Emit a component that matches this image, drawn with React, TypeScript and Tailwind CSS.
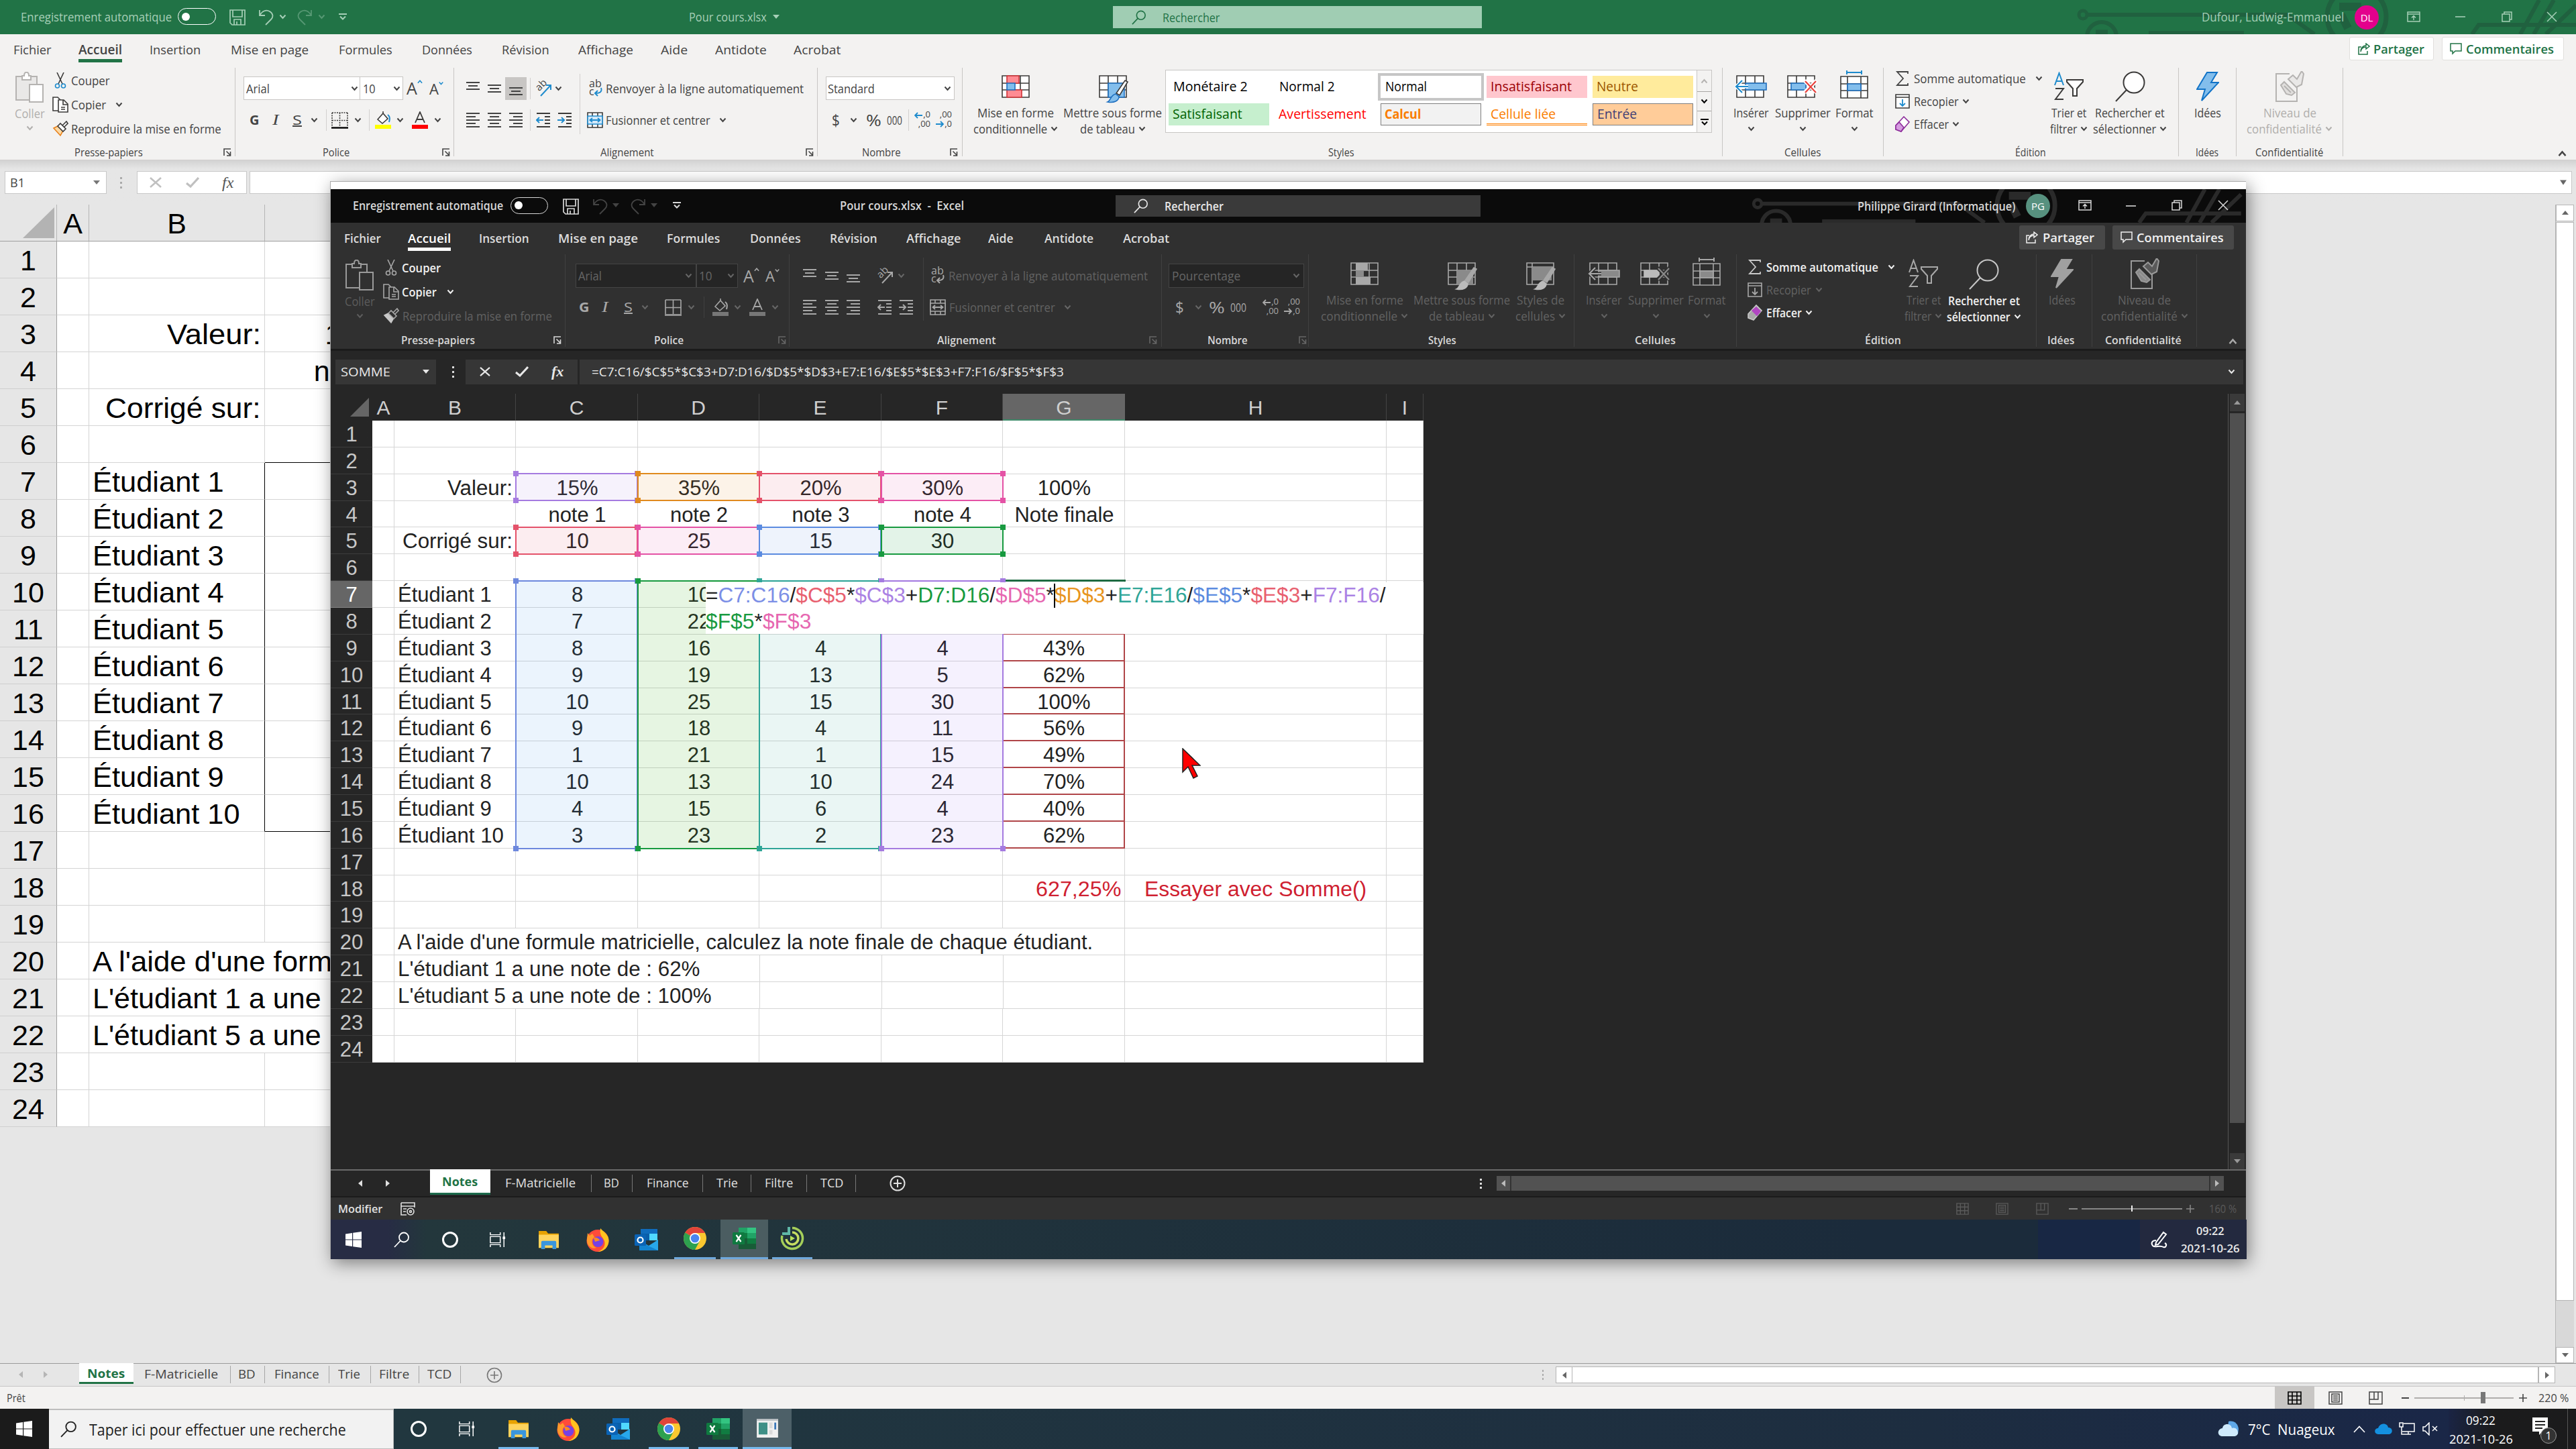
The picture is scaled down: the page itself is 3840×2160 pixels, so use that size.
import React, { useLayoutEffect, useRef, useState } from "react";

type P = { c?: string };
type Kids = { c?: string; children?: React.ReactNode };

/** Single-line text condensed or expanded to the width of its box. */
function L({ c = "", children }: Kids) {
  const box = useRef<HTMLSpanElement>(null);
  const inner = useRef<HTMLSpanElement>(null);
  const [k, setK] = useState(1);
  useLayoutEffect(() => {
    if (box.current && inner.current && inner.current.offsetWidth > 0) {
      setK(box.current.clientWidth / inner.current.offsetWidth);
    }
  }, []);
  return (
    <span ref={box} className={`block shrink-0 whitespace-nowrap ${c}`}>
      <span ref={inner} className="block w-max origin-left" style={{ transform: `scaleX(${k})` }}>
        {children}
      </span>
    </span>
  );
}

/* ---------- small glyphs ---------- */
const Chev = ({ c = "" }: P) => (
  <svg viewBox="0 0 11 8" className={`h-[8px] w-[11px] shrink-0 fill-none stroke-current ${c}`}>
    <path d="M1.5 1.5 5.5 6 9.5 1.5" strokeWidth="2" />
  </svg>
);
const Tri = ({ c = "" }: P) => (
  <svg viewBox="0 0 10 6" className={`h-[6px] w-[10px] shrink-0 fill-current ${c}`}>
    <path d="M0 0H10L5 6Z" />
  </svg>
);
const Save = ({ c = "" }: P) => (
  <svg viewBox="0 0 24 24" className={`h-[24px] w-[24px] shrink-0 fill-none stroke-current ${c}`} strokeWidth="1.7">
    <path d="M1 1H23V23H4L1 20ZM5 1V11H19V1M7 23V15H17V23M11 18V23" />
  </svg>
);
const Undo = ({ c = "" }: P) => (
  <svg viewBox="0 0 24 24" className={`h-[24px] w-[24px] shrink-0 fill-none stroke-current ${c}`} strokeWidth="1.8">
    <path d="M2 1V9H10M2 9C6 2 12 0 17 3C22 6 23 11 19 15L11 23" />
  </svg>
);
const Redo = ({ c = "" }: P) => (
  <svg viewBox="0 0 24 24" className={`h-[24px] w-[24px] shrink-0 fill-none stroke-current ${c}`} strokeWidth="1.8">
    <path d="M22 1V9H14M22 9C18 2 12 0 7 3C2 6 1 11 5 15L13 23" />
  </svg>
);
const Custom = ({ c = "" }: P) => (
  <svg viewBox="0 0 12 10" className={`h-[10px] w-[12px] shrink-0 fill-none stroke-current ${c}`} strokeWidth="2">
    <path d="M0 1H12M2 4.500L6 8.500L10 4.500" />
  </svg>
);
const Mag = ({ c = "" }: P) => (
  <svg viewBox="0 0 24 24" className={`shrink-0 fill-none stroke-current ${c}`} strokeWidth="1.8">
    <circle cx="15" cy="8.500" r="7" />
    <path d="M10 13.500 1 23" />
  </svg>
);
const RibbonOpt = ({ c = "" }: P) => (
  <svg viewBox="0 0 20 16" className={`h-[16px] w-[20px] shrink-0 fill-none stroke-current ${c}`} strokeWidth="1.5">
    <path d="M1 1H19V15H1ZM1 4H19M10 13V7M7 9.500 10 6.500 13 9.500" />
  </svg>
);
const Minus = ({ c = "" }: P) => (
  <svg viewBox="0 0 15 15" className={`h-[15px] w-[15px] shrink-0 stroke-current ${c}`} strokeWidth="1.6">
    <path d="M0 8H15" />
  </svg>
);
const Restore = ({ c = "" }: P) => (
  <svg viewBox="0 0 16 16" className={`h-[16px] w-[16px] shrink-0 fill-none stroke-current ${c}`} strokeWidth="1.5">
    <path d="M1 4H12V15H1ZM4 4V1H15V12H12" />
  </svg>
);
const Close = ({ c = "" }: P) => (
  <svg viewBox="0 0 16 16" className={`h-[16px] w-[16px] shrink-0 stroke-current ${c}`} strokeWidth="1.5">
    <path d="M1 1 15 15M15 1 1 15" />
  </svg>
);
const Launch = ({ c = "" }: P) => (
  <svg viewBox="0 0 12 12" className={`h-[12px] w-[12px] shrink-0 fill-none stroke-current ${c}`} strokeWidth="1.6">
    <path d="M1 11V1H11M4.500 4.500 10 10M10.500 5V11H5" />
  </svg>
);
const Share = ({ c = "" }: P) => (
  <svg viewBox="0 0 18 18" className={`h-[18px] w-[18px] shrink-0 fill-none stroke-current ${c}`} strokeWidth="1.5">
    <path d="M5 6H1V17H14V12M4 13C5 8 8 6 12 6V9L17 5L12 1V4C8 4 4 7 4 13Z" />
  </svg>
);
const Comment = ({ c = "" }: P) => (
  <svg viewBox="0 0 18 18" className={`h-[18px] w-[18px] shrink-0 fill-none stroke-current ${c}`} strokeWidth="1.5">
    <path d="M1 1H17V12H8L4 16V12H1Z" />
  </svg>
);

/* ---------- ribbon drawings; `d` is the dark theme ---------- */
type D = { c?: string; d?: boolean };
const blue = (d?: boolean) => (d ? "#a8a8a8" : "#1e8bcd");
const ink = (d?: boolean) => (d ? "#a8a8a8" : "#3b3a39");
const fillBlue = (d?: boolean) => (d ? "#8a8a8a" : "#83beec");
const paper = (d?: boolean) => (d ? "#303030" : "#ffffff");

const Paste = ({ d }: D) => (
  <svg viewBox="0 0 42 46" className="h-[46px] w-[42px] shrink-0" fill={d ? "none" : "#e9e8e7"} stroke={d ? "#9a9a9a" : "#b5b3b1"} strokeWidth="2">
    <path d="M1 7H10V12H23V7H32V42H1Z" />
    <path d="M10 12V6H13C13 -1 20 -1 20 6H23V12Z" fill={paper(d)} />
    <path d="M21 19H41V45H21Z" fill={paper(d)} />
  </svg>
);
const Cut = ({ d }: D) => (
  <svg viewBox="0 0 24 24" className="h-[24px] w-[24px] shrink-0" fill="none" strokeWidth="1.6">
    <path d="M7 0 15 17M17 0 9 17" stroke={ink(d)} />
    <circle cx="7.500" cy="20" r="3" stroke={blue(d)} />
    <circle cx="16.500" cy="20" r="3" stroke={blue(d)} />
  </svg>
);
const CopyI = ({ d }: D) => (
  <svg viewBox="0 0 24 24" className="h-[24px] w-[24px] shrink-0" fill={paper(d)} stroke={ink(d)} strokeWidth="1.6">
    <path d="M1 1H8L12 5V21H1Z" />
    <path d="M9 5H17L23 11V23H9ZM16 5V12H23M13 16H19M13 19H19" />
  </svg>
);
const Brush = ({ d }: D) => (
  <svg viewBox="0 0 24 24" className="h-[24px] w-[24px] shrink-0" strokeWidth="1.6">
    <path d="M2 11 12 22 16 15 8 8Z" fill={d ? "#c8c8c8" : "#fbd9a5"} stroke={d ? "#c8c8c8" : "#e8811a"} />
    <path d="M8 8 12 4 20 12 16 16ZM15 7 21 1 23 4 18 9" fill={paper(d)} stroke={ink(d)} />
  </svg>
);
const AUp = ({ d, down }: D & { down?: boolean }) => (
  <span className="flex shrink-0 items-start leading-none">
    <span className={down ? "text-[22px]" : "text-[25px]"}>A</span>
    <svg viewBox="0 0 9 6" className="h-[6px] w-[8px]" fill="none" stroke={blue(d)} strokeWidth="1.8">
      <path d={down ? "M1 1 4.500 5 8 1" : "M1 5 4.500 1 8 5"} />
    </svg>
  </span>
);
const Borders = ({ d }: D) => (
  <svg viewBox="0 0 25 25" className="h-[25px] w-[25px] shrink-0" fill="none" stroke={ink(d)} strokeWidth="1.6">
    <path d="M1 1H24M1 12.500H24M1 1V22M12.500 1V22M24 1V22" strokeDasharray={d ? "none" : "2 1.500"} />
    <path d="M0 23.500H25" strokeWidth="2.400" stroke={d ? "#a8a8a8" : "#000"} />
  </svg>
);
const Bucket = ({ d }: D) => (
  <svg viewBox="0 0 24 26" className="h-[26px] w-[24px] shrink-0">
    <path d="M4 12 12 3 19 11 11 18Z M12 3V0" fill={paper(d)} stroke={ink(d)} strokeWidth="1.600" />
    <path d="M19 5C23 8 22 12 21 16" stroke={blue(d)} strokeWidth="2" fill="none" />
    <path d="M0 20H24V26H0Z" fill={d ? "#777" : "#ffff00"} />
  </svg>
);
const FontColor = ({ d }: D) => (
  <svg viewBox="0 0 24 26" className="h-[26px] w-[24px] shrink-0">
    <path d="M5 17 12 1 19 17M8 12H16" fill="none" stroke={ink(d)} strokeWidth="1.800" />
    <path d="M0 20H24V26H0Z" fill={d ? "#777" : "#ff0000"} />
  </svg>
);
const Lines = ({ c = "", v }: { c?: string; v: "t" | "m" | "b" | "l" | "c" | "r" }) => {
  const paths = {
    t: "M1 3H21M4 8H18M1 13H21",
    m: "M1 7H21M4 12H18M1 17H21",
    b: "M1 11H21M4 16H18M1 21H21",
    l: "M1 2H21M1 7H15M1 12H21M1 17H15M1 22H21",
    c: "M1 2H21M4 7H18M1 12H21M4 17H18M1 22H21",
    r: "M1 2H21M7 7H21M1 12H21M7 17H21M1 22H21",
  };
  return (
    <svg viewBox="0 0 22 24" className={`h-[24px] w-[22px] shrink-0 stroke-current ${c}`} strokeWidth="1.800">
      <path d={paths[v]} />
    </svg>
  );
};
const Indent = ({ d, out }: D & { out?: boolean }) => (
  <svg viewBox="0 0 22 24" className="h-[24px] w-[22px] shrink-0" fill="none" strokeWidth="1.800">
    <path d="M1 2H21M13 7H21M13 12H21M13 17H21M1 22H21" stroke={ink(d)} />
    <path d={out ? "M11 12H1M5 8 1 12 5 16" : "M0 12H10M6 8 10 12 6 16"} stroke={blue(d)} strokeWidth="2" />
  </svg>
);
const Orient = ({ d, c = "" }: D) => (
  <span className={`relative h-[26px] w-[24px] shrink-0 ${c}`}>
    <span className="absolute left-[-1px] top-[-3px] block -rotate-45 text-[15px] leading-[20px]">ab</span>
    <svg viewBox="0 0 24 26" className="absolute inset-0 h-[26px] w-[24px]" fill="none" stroke={blue(d)} strokeWidth="2">
      <path d="M8 24 23 8M16 8H23V15" />
    </svg>
  </span>
);
const Wrap = ({ d, c = "" }: D) => (
  <span className={`relative h-[26px] w-[20px] shrink-0 text-[16px] ${c}`}>
    <span className="absolute left-0 top-[-4px] block leading-[18px]">ab</span>
    <span className="absolute left-0 top-[8px] block leading-[18px]">c</span>
    <svg viewBox="0 0 20 26" className="absolute inset-0 h-[26px] w-[20px]" fill="none" stroke={blue(d)} strokeWidth="2">
      <path d="M18 12C20 18 16 20 10 20M13 16 9 20 13 24" />
    </svg>
  </span>
);
const Merge = ({ d, c = "" }: D) => (
  <svg viewBox="0 0 24 24" className={`h-[24px] w-[24px] shrink-0 ${c}`} fill={paper(d)} strokeWidth="1.600">
    <path d="M1 1H23V23H1ZM8 1V23M16 1V23" stroke={ink(d)} />
    <path d="M1 6H23V18H1Z" fill={d ? "#303030" : "#d5e9f8"} stroke={blue(d)} />
    <path d="M4 12H20M8 9 4.500 12 8 15M16 9 19.500 12 16 15" stroke={blue(d)} fill="none" strokeWidth="1.800" />
  </svg>
);
const Dec = ({ d, more, c = "" }: D & { more?: boolean }) => (
  <span className={`relative h-[26px] w-[24px] shrink-0 text-[13px] ${c}`}>
    <span className="absolute right-0 top-[-3px] block leading-[14px]">{more ? ",0" : ",00"}</span>
    <span className="absolute right-0 top-[11px] block leading-[14px]">{more ? ",00" : ",0"}</span>
    <svg viewBox="0 0 24 26" className="absolute inset-0 h-[26px] w-[24px]" fill="none" stroke={blue(d)} strokeWidth="1.800">
      <path d={more ? "M12 6H1M5 2 1 6 5 10" : "M0 19H11M7 15 11 19 7 23"} />
    </svg>
  </span>
);
const grid = "M1 1H41V33H1ZM1 12H41M1 22H41M14 1V33M28 1V33";
const CondFmt = ({ d }: D) => (
  <svg viewBox="0 0 42 34" className="h-[34px] w-[42px]">
    <path d={grid} fill={paper(d)} stroke={ink(d)} strokeWidth="1.600" />
    <path d="M8 1H26V12H8ZM8 22H30V33H8Z" fill={d ? "#a8a8a8" : "#ff8b93"} stroke={d ? "none" : "#d13438"} strokeWidth="1.600" />
    <path d="M8 12H20V22H8Z" fill={fillBlue(d)} stroke={d ? "none" : "#1e6fbf"} strokeWidth="1.600" />
  </svg>
);
const TableFmt = ({ d, plain }: D & { plain?: boolean }) => (
  <svg viewBox="0 0 46 42" className="ml-[4px] mt-[8px] h-[42px] w-[46px]">
    <path d={plain ? "M1 1H41V33H1ZM1 7H41M9 1V33" : grid} fill={paper(d)} stroke={ink(d)} strokeWidth="1.600" />
    <path d={plain ? "M9 7H38V27H9Z" : "M14 12H38V33H14Z"} fill={fillBlue(d)} stroke={d ? "none" : "#1e6fbf"} strokeWidth="1.600" />
    <path d="M43 10 31 30 26 27 39 8Z" fill={d ? "#a8a8a8" : "#fff"} stroke={ink(d)} strokeWidth="1.600" />
    <path d="M25 28 30 32C30 38 23 42 13 40C18 38 17 30 25 28Z" fill={d ? "#bbb" : "#83beec"} stroke={d ? "#bbb" : "#1e6fbf"} strokeWidth="1.600" />
  </svg>
);
const InsertI = ({ d }: D) => (
  <svg viewBox="-2 0 48 34" className="h-[34px] w-[48px]">
    <path d={grid} fill={paper(d)} stroke={ink(d)} strokeWidth="1.600" />
    <path d="M14 12H45V22H14Z" fill={fillBlue(d)} stroke={d ? "#a8a8a8" : "#1e6fbf"} strokeWidth="1.600" />
    <path d="M18 17H0M9 8 0 17 9 26" fill="none" stroke={paper(d)} strokeWidth="5" />
    <path d="M18 17H0M9 8 0 17 9 26" fill="none" stroke={blue(d)} strokeWidth="2.200" />
  </svg>
);
const DeleteI = ({ d }: D) => (
  <svg viewBox="0 0 46 34" className="h-[34px] w-[46px]">
    <path d={grid} fill={paper(d)} stroke={ink(d)} strokeWidth="1.600" />
    <path d="M6 12H28V22H6Z" fill={d ? "#bbb" : "#83beec"} stroke={d ? "#bbb" : "#1e6fbf"} strokeWidth="1.600" />
    <path d="M26 8 44 26M44 8 26 26" fill="none" stroke={paper(d)} strokeWidth="6" />
    <path d="M27 9 43 26M43 9 27 26" fill="none" stroke={d ? "#8a8a8a" : "#e8413c"} strokeWidth="2.200" />
  </svg>
);
const FormatI = ({ d }: D) => (
  <svg viewBox="0 0 42 42" className="-mt-[6px] h-[42px] w-[42px]">
    <path d="M10 3H32M10 0V6M32 0V6" stroke={blue(d)} strokeWidth="2" />
    <path d="M1 9H41V41H1ZM1 20H41M1 30H41M11 9V41M31 9V41" fill={paper(d)} stroke={ink(d)} strokeWidth="1.600" />
    <path d="M11 20H31V30H11Z" fill={fillBlue(d)} stroke={d ? "#a8a8a8" : "#1e6fbf"} strokeWidth="1.600" />
  </svg>
);
const Sigma = ({ c = "" }: D) => (
  <svg viewBox="0 0 20 22" className={`h-[22px] w-[22px] shrink-0 fill-none stroke-current ${c}`} strokeWidth="1.800">
    <path d="M18 4V1H2L11 11L2 21H18V18" />
  </svg>
);
const FillDown = ({ d, c = "" }: D) => (
  <svg viewBox="0 0 22 22" className={`h-[22px] w-[22px] shrink-0 ${c}`} fill={paper(d)} strokeWidth="1.600">
    <path d="M1 1H21V21H1ZM1 5H21" stroke={ink(d)} />
    <path d="M11 8V18M7 14 11 18 15 14" stroke={blue(d)} fill="none" strokeWidth="1.800" />
  </svg>
);
const Eraser = ({ d, c = "" }: D) => (
  <svg viewBox="0 0 22 24" className={`h-[24px] w-[22px] shrink-0 ${c}`} strokeWidth="1.600">
    <path d="M1 14 13 1 21 9 9 23 1 20Z" fill={d ? "#a8a8a8" : "#fff"} stroke={d ? "#c8c8c8" : "#8e2f9c"} />
    <path d={d ? "M7 9 14 16 19 10 13 4Z" : "M1 14 6 9 13 17 9 23 1 20Z"} fill={d ? "#b146c2" : "#d59be0"} stroke={d ? "#b146c2" : "#8e2f9c"} />
  </svg>
);
const SortFilter = ({ d }: D) => (
  <svg viewBox="0 0 44 44" className="h-[44px] w-[44px]" fill="none" strokeWidth="2">
    <path d="M1 20 7.500 2 14 20M3.500 14H11.500" stroke={blue(d)} />
    <path d="M2 25H14L2 41H14" stroke={ink(d)} />
    <path d="M19 12H43V15L34 25V36H28V25L19 15Z" stroke={ink(d)} fill={d ? "none" : "#fff"} />
  </svg>
);
const BigMag = ({ d }: D) => (
  <svg viewBox="0 0 46 46" className="h-[46px] w-[46px]" fill={d ? "none" : "#fff"} stroke={d ? "#c8c8c8" : "#3b3a39"} strokeWidth="2">
    <circle cx="29" cy="17" r="15.500" />
    <path d="M18 28 2 45" />
  </svg>
);
const Bolt = ({ d }: D) => (
  <svg viewBox="0 0 34 44" className="h-[44px] w-[34px]" fill={d ? "#a0a0a0" : "#83beec"} stroke={d ? "#a0a0a0" : "#1173c7"} strokeWidth="2">
    <path d="M16 1H31L22 16H33L8 43L13 26H1Z" />
  </svg>
);
const Sensitivity = ({ d }: D) => (
  <svg viewBox="0 0 44 46" className="h-[46px] w-[44px]" fill="none" stroke={d ? "#9a9a9a" : "#b5b3b1"} strokeWidth="2">
    <path d="M22 4H2V45H33V22" />
    <path d="M9 21 14 16 30 32 25 36 17 34ZM14 22 24 32" fill={d ? "#8a8a8a" : "#e1dfdd"} />
    <path d="M20 12 27 6 33 12 40 0 43 4 40 20 32 24Z" fill={d ? "#5a5a5a" : "#e9e8e7"} />
  </svg>
);

/* ---------- brand marks for the task bars ---------- */
const WinLogo = ({ c = "" }: P) => (
  <svg viewBox="0 0 24 24" className={`h-[24px] w-[24px] shrink-0 fill-white ${c}`}>
    <path d="M0 3.400 10 2V11.400H0ZM11.200 1.800 24 0V11.400H11.200ZM0 12.600H10V22L0 20.600ZM11.200 12.600H24V24L11.200 22.200Z" />
  </svg>
);
const Ring = ({ c = "" }: P) => (
  <svg viewBox="0 0 26 26" className={`h-[26px] w-[26px] shrink-0 fill-none stroke-white ${c}`} strokeWidth="3">
    <circle cx="13" cy="13" r="10.500" />
  </svg>
);
const TaskView = ({ c = "" }: P) => (
  <svg viewBox="0 0 26 26" className={`h-[24px] w-[26px] shrink-0 fill-none stroke-white ${c}`} strokeWidth="1.600">
    <path d="M1 1V5H17V1M1 8H17V18H1ZM1 25V21H17V25M23 1V25" />
    <path d="M21 8H25V12H21Z" fill="#fff" stroke="none" />
  </svg>
);
const Folder = ({ c = "" }: P) => (
  <svg viewBox="0 0 34 30" className={`h-[28px] w-[34px] shrink-0 ${c}`}>
    <path d="M1 1H13L16 5H33V28H1Z" fill="#e8a200" />
    <path d="M1 7H33V28H1Z" fill="#ffd45e" />
    <path d="M5 30V19Q5 17 7 17H27Q29 17 29 19V30H23V24H11V30Z" fill="#3a96dd" />
  </svg>
);
const Firefox = ({ c = "" }: P) => (
  <svg viewBox="0 0 36 36" className={`h-[36px] w-[36px] shrink-0 ${c}`}>
    <circle cx="18" cy="19.500" r="16.500" fill="#ff4b3a" />
    <path d="M22 1C26 6 35 10 34.500 20C34 29 27 36 18 36C27 33 30 26 28 20C26 14 20 12 22 1Z" fill="#ffc21f" />
    <path d="M3 8 6 12 10 9 13 14C8 17 8 27 16 30C8 33 1 26 2 17Z" fill="#ff9a2b" />
    <circle cx="18.500" cy="21" r="8" fill="#7542e5" />
    <path d="M12 15C16 14 20 16 21 19L14 21Z" fill="#ff8a1f" />
  </svg>
);
const Outlook = ({ c = "" }: P) => (
  <svg viewBox="0 0 36 34" className={`h-[34px] w-[36px] shrink-0 ${c}`}>
    <path d="M9 1H34V18H9Z" fill="#0f6cbd" />
    <path d="M22 8H34V18H22Z" fill="#50d9ff" />
    <path d="M9 8H22V18H9Z" fill="#0a5ea8" />
    <path d="M7 18 21 26 35 17V33H7Z" fill="#28a8ea" />
    <path d="M7 20 35 33H7Z" fill="#1383cf" />
    <rect y="9" width="17" height="17" rx="1.500" fill="#0a63b5" />
    <circle cx="8.500" cy="17.500" r="4" fill="none" stroke="#fff" strokeWidth="2.200" />
  </svg>
);
const Chrome = ({ c = "" }: P) => (
  <svg viewBox="0 0 36 36" className={`h-[36px] w-[36px] shrink-0 ${c}`}>
    <circle cx="18" cy="18" r="17" fill="#fbc72f" />
    <path d="M18 18 3.300 9.500A17 17 0 0 1 32.700 9.500L33 10H18Z" fill="#e0443a" />
    <path d="M3.300 9.500A17 17 0 0 0 18 35L25 22 18 18Z" fill="#2da14f" />
    <circle cx="18" cy="18" r="8" fill="#fff" />
    <circle cx="18" cy="18" r="6.300" fill="#4a85ee" />
  </svg>
);
const ExcelI = ({ c = "" }: P) => (
  <svg viewBox="0 0 36 34" className={`h-[34px] w-[36px] shrink-0 ${c}`}>
    <path d="M9 1H22V12H9Z" fill="#21a366" />
    <path d="M22 1H35V9H22Z" fill="#33c481" />
    <path d="M22 9H35V17H22Z" fill="#21a366" />
    <path d="M9 9H22V17H9Z" fill="#107c41" />
    <path d="M9 17H35V33H9Z" fill="#185c37" />
    <path d="M22 17H35V25H22Z" fill="#107c41" />
    <rect y="8" width="18" height="18" rx="1.500" fill="#0f7a40" />
    <path d="M5.500 12 12.500 22M12.500 12 5.500 22" stroke="#fff" strokeWidth="2.200" />
  </svg>
);
const Camtasia = ({ c = "" }: P) => (
  <svg viewBox="0 0 36 36" className={`h-[36px] w-[36px] shrink-0 fill-none ${c}`}>
    <path d="M18 2.500A15.500 15.500 0 1 1 3 14" stroke="#a5cf5a" strokeWidth="3.500" />
    <path d="M18 9A9 9 0 1 1 9 19" stroke="#c6dd62" strokeWidth="3.500" />
    <path d="M3 11H13V1" stroke="#5fb8a8" strokeWidth="4" />
    <path d="M15 14 22 18 15 22Z" fill="#b9e35a" />
  </svg>
);
const AppWin = () => (
  <svg viewBox="0 0 34 30" className="h-[28px] w-[34px] shrink-0">
    <path d="M0 0H34V30H0Z" fill="#f0f0f0" />
    <path d="M0 0H34V3H0Z" fill="#b9bec2" />
    <path d="M3 6H17V25H3Z" fill="#3f8f86" />
    <path d="M20 6H25V15H20ZM20 18H25V25H20Z" fill="#dadada" />
    <path d="M28 6H31V17H28Z" fill="#3b78b8" />
  </svg>
);

/* ---------- shared pieces ---------- */
const Sep = ({ c }: { c: string }) => <span className={`w-px shrink-0 ${c}`} />;
const Big = ({ c, icon, children }: { c: string; icon: React.ReactNode; children: React.ReactNode }) => (
  <div className={`flex shrink-0 flex-col items-center ${c}`}>
    <div className="mb-[4px] flex h-[46px] items-center justify-center">{icon}</div>
    {children}
  </div>
);
const Line = ({ children }: Kids) => <div className="flex h-[24px] items-center gap-[5px]">{children}</div>;
const Toggle = ({ c = "" }: P) => (
  <span className={`flex h-[25px] shrink-0 items-center rounded-full border-[1.5px] border-current pl-[5px] ${c}`}>
    <span className="h-[12px] w-[12px] rounded-full bg-white" />
  </span>
);
const Circuit = ({ stroke }: { stroke: string }) => (
  <svg viewBox="0 0 745 51" className="absolute right-0 top-0 h-full w-[745px] fill-none" stroke={stroke} strokeWidth="6">
    <circle cx="10" cy="22" r="6" strokeWidth="5" />
    <path d="M17 22H315L355 51M108 49H250M590 51 600 37H745M662 51 690 0M682 51 712 0M700 51 745 8" />
    <circle cx="38" cy="55" r="22" />
    <path d="M29 48H47" strokeWidth="7" />
    <circle cx="418" cy="25" r="44" strokeWidth="7" />
    <path d="M392 10H425M395 22 405 42" strokeWidth="12" />
  </svg>
);

/* ---------- light window ---------- */
const LG = ({ c, label, children }: { c: string; label: React.ReactNode; children: React.ReactNode }) => (
  <div className={`h-[132px] shrink-0 border-r border-[#c8c6c4] ${c}`}>
    <div className="flex h-[113px]">{children}</div>
    <div className="flex h-[26px] items-center text-[16.5px]">{label}</div>
  </div>
);

function LightRibbon() {
  return (
    <div className="flex h-[138px] border-b border-[#d2d0ce] text-[18px] text-[#444]">
      <LG c="w-[351px]" label={<><L c="ml-[111px] w-[102px]">Presse-papiers</L><Launch c="ml-[120px]" /></>}>
        <div className="ml-[18px] flex w-[52px] shrink-0 flex-col items-center pt-[6px] text-[#b1afad]">
          <Paste />
          <L c="mt-[4px] w-[45px]">Coller</L>
          <Chev c="mt-[6px]" />
        </div>
        <div className="pt-px">
          <div className="flex h-[36px] items-center pl-[8px]"><Cut /><L c="ml-[4px] w-[58px]">Couper</L></div>
          <div className="flex h-[36px] items-center pl-[8px]"><CopyI /><L c="ml-[4px] w-[52px]">Copier</L><Chev c="ml-[14px]" /></div>
          <div className="flex h-[36px] items-center pl-[8px]"><Brush /><L c="ml-[4px] w-[224px]">Reproduire la mise en forme</L></div>
        </div>
      </LG>
      <LG c="w-[326px]" label={<><L c="ml-[130px] w-[40px]">Police</L><Launch c="ml-[138px]" /></>}>
        <div className="pt-[13px]">
          <div className="flex h-[35px] items-center">
            <div className="ml-[12px] flex h-[35px] w-[174px] items-center border border-[#c8c6c4] bg-white"><L c="ml-[3px] w-[35px]">Arial</L><Chev c="ml-[121px]" /></div>
            <div className="flex h-[35px] w-[64px] items-center border border-l-0 border-[#c8c6c4] bg-white"><L c="ml-[4px] w-[19px]">10</L><Chev c="ml-[26px]" /></div>
            <div className="ml-[5px] w-[24px]"><AUp /></div>
            <div className="ml-[10px] w-[21px]"><AUp down /></div>
          </div>
          <div className="mt-[13px] flex h-[34px] items-center">
            <L c="ml-[21px] w-[14px] text-[20px] font-bold">G</L>
            <L c="ml-[20px] w-[10px] font-['Liberation_Serif'] text-[23px] italic">I</L>
            <L c="ml-[20px] w-[14px] text-[20px] underline">S</L>
            <Chev c="ml-[13px]" /><Sep c="ml-[12px] h-[32px] bg-[#d2d0ce]" />
            <span className="ml-[7px] shrink-0"><Borders /></span><Chev c="ml-[9px]" /><Sep c="ml-[11px] h-[32px] bg-[#d2d0ce]" />
            <span className="ml-[8px] shrink-0"><Bucket /></span><Chev c="ml-[8px]" />
            <span className="ml-[12px] shrink-0"><FontColor /></span><Chev c="ml-[9px]" />
          </div>
        </div>
      </LG>
      <LG c="w-[542px]" label={<><L c="ml-[218px] w-[80px]">Alignement</L><Launch c="ml-[226px]" /></>}>
        <div className="w-[187px] shrink-0 pt-[13px]">
          <div className="flex h-[35px] items-center">
            <Lines c="ml-[17px]" v="t" /><Lines c="ml-[10px]" v="m" />
            <span className="ml-[5px] flex h-[34px] w-[32px] shrink-0 items-center justify-center bg-[#c8c6c4]"><Lines v="b" /></span>
            <Sep c="ml-[5px] h-[32px] bg-[#d2d0ce]" /><Orient c="ml-[7px]" /><Chev c="ml-[5px]" />
          </div>
          <div className="mt-[13px] flex h-[34px] items-center">
            <Lines c="ml-[17px]" v="l" /><Lines c="ml-[10px]" v="c" /><Lines c="ml-[10px]" v="r" />
            <Sep c="ml-[10px] h-[32px] bg-[#d2d0ce]" />
            <span className="ml-[8px] shrink-0"><Indent out /></span><span className="ml-[10px] shrink-0"><Indent /></span>
          </div>
        </div>
        <Sep c="mt-[9px] h-[90px] bg-[#d2d0ce]" />
        <div className="pt-[13px]">
          <div className="flex h-[35px] items-center"><Wrap c="ml-[13px]" /><L c="ml-[5px] w-[295px]">Renvoyer à la ligne automatiquement</L></div>
          <div className="mt-[13px] flex h-[34px] items-center"><Merge c="ml-[10px]" /><L c="ml-[4px] w-[156px]">Fusionner et centrer</L><Chev c="ml-[13px]" /></div>
        </div>
      </LG>
      <LG c="w-[216px]" label={<><L c="ml-[66px] w-[58px]">Nombre</L><Launch c="ml-[73px]" /></>}>
        <div className="pt-[13px]">
          <div className="ml-[12px] flex h-[35px] w-[192px] items-center border border-[#c8c6c4] bg-white"><L c="ml-[2px] w-[70px]">Standard</L><Chev c="ml-[103px]" /></div>
          <div className="mt-[13px] flex h-[34px] items-center">
            <L c="ml-[21px] w-[12px] text-[24px]">$</L><Chev c="ml-[15px]" /><L c="ml-[13px] w-[23px] text-[24px]">%</L><L c="ml-[8px] w-[23px]">000</L>
            <Sep c="ml-[9px] h-[32px] bg-[#d2d0ce]" /><Dec more c="ml-[8px]" /><Dec c="ml-[8px]" />
          </div>
        </div>
      </LG>
      <LG c="w-[1133px]" label={<L c="ml-[545px] w-[39px]">Styles</L>}>
        <Big c="ml-[10px] w-[137px] pt-[5px]" icon={<CondFmt />}>
          <Line><L c="w-[114px]">Mise en forme</L></Line><Line><L c="w-[110px]">conditionnelle</L><Chev /></Line>
        </Big>
        <Big c="w-[153px] pt-[5px]" icon={<TableFmt />}>
          <Line><L c="w-[147px]">Mettre sous forme</L></Line><Line><L c="w-[82px]">de tableau</L><Chev /></Line>
        </Big>
        <div className="ml-[2px] mt-[3px] flex h-[94px] w-[815px] border border-[#c8c6c4] bg-white text-[20px] leading-[32px]">
          <div className="grid w-[791px] shrink-0 grid-cols-[repeat(5,150px)] grid-rows-[33px_33px] gap-x-[8px] gap-y-[8px] pl-[4px] pt-[8px] text-black">
            <div className="pl-[7px]"><L c="w-[111px]">Monétaire 2</L></div>
            <div className="pl-[7px]"><L c="w-[83px]">Normal 2</L></div>
            <div className="pl-[7px] outline-4 outline-[#c6c6c6]"><L c="w-[62px]">Normal</L></div>
            <div className="bg-[#ffc7ce] pl-[6px] text-[#9c0006]"><L c="w-[121px]">Insatisfaisant</L></div>
            <div className="bg-[#ffeb9c] pl-[6px] text-[#9c5700]"><L c="w-[62px]">Neutre</L></div>
            <div className="bg-[#c6efce] pl-[6px] text-[#006100]"><L c="w-[104px]">Satisfaisant</L></div>
            <div className="pl-[6px] text-[#ff0000]"><L c="w-[131px]">Avertissement</L></div>
            <div className="border border-[#7f7f7f] bg-[#f2f2f2] pl-[5px] font-bold leading-[30px] text-[#fa7d00]"><L c="w-[54px]">Calcul</L></div>
            <div className="border-b-[3px] border-double border-[#ff8001] pl-[6px] text-[#fa7d00]"><L c="w-[97px]">Cellule liée</L></div>
            <div className="border border-[#7f7f7f] bg-[#ffcc99] pl-[6px] leading-[30px] text-[#3f3f76]"><L c="w-[59px]">Entrée</L></div>
          </div>
          <div className="flex w-[22px] flex-col border-l border-[#c8c6c4] text-black">
            <div className="flex h-[31px] items-center justify-center bg-[#f3f2f1] text-[#b5b3b1]"><Chev c="rotate-180" /></div>
            <div className="flex h-[30px] items-center justify-center border-y border-[#a8a6a4] bg-[#f3f2f1]"><Chev /></div>
            <div className="flex h-[31px] items-center justify-center bg-[#f3f2f1]"><Custom /></div>
          </div>
        </div>
      </LG>
      <LG c="w-[240px]" label={<L c="ml-[92px] w-[54px]">Cellules</L>}>
        <Big c="ml-[13px] w-[58px] pt-[5px]" icon={<InsertI />}><Line><L c="w-[53px]">Insérer</L></Line><Line><Chev /></Line></Big>
        <Big c="ml-[4px] w-[88px] pt-[5px]" icon={<DeleteI />}><Line><L c="w-[83px]">Supprimer</L></Line><Line><Chev /></Line></Big>
        <Big c="ml-[3px] w-[60px] pt-[5px]" icon={<FormatI />}><Line><L c="w-[57px]">Format</L></Line><Line><Chev /></Line></Big>
      </LG>
      <LG c="w-[440px]" label={<L c="ml-[196px] w-[46px]">Édition</L>}>
        <div className="-mt-px w-[243px] shrink-0">
          <div className="flex h-[34px] items-center"><Sigma c="ml-[17px]" /><L c="ml-[6px] w-[167px]">Somme automatique</L><Chev c="ml-[14px]" /></div>
          <div className="flex h-[34px] items-center"><FillDown c="ml-[17px]" /><L c="ml-[6px] w-[67px]">Recopier</L><Chev c="ml-[5px]" /></div>
          <div className="flex h-[34px] items-center"><Eraser c="ml-[17px]" /><L c="ml-[6px] w-[52px]">Effacer</L><Chev c="ml-[5px]" /></div>
        </div>
        <Big c="w-[66px] pt-[5px]" icon={<SortFilter />}><Line><L c="w-[52px]">Trier et</L></Line><Line><L c="w-[40px]">filtrer</L><Chev /></Line></Big>
        <Big c="w-[116px] pt-[5px]" icon={<BigMag />}><Line><L c="w-[104px]">Rechercher et</L></Line><Line><L c="w-[94px]">sélectionner</L><Chev /></Line></Big>
      </LG>
      <LG c="w-[86px]" label={<L c="ml-[25px] w-[34px]">Idées</L>}>
        <Big c="w-[85px] pt-[5px]" icon={<Bolt />}><Line><L c="w-[40px]">Idées</L></Line></Big>
      </LG>
      <LG c="w-[159px]" label={<L c="ml-[28px] w-[101px]">Confidentialité</L>}>
        <Big c="w-[158px] pt-[5px] text-[#b1afad]" icon={<Sensitivity />}>
          <Line><L c="w-[79px]">Niveau de</L></Line><Line><L c="w-[112px]">confidentialité</L><Chev /></Line>
        </Big>
      </LG>
      <Chev c="ml-[321px] mt-[124px] scale-125 rotate-180" />
    </div>
  );
}

const lightNotes: Record<number, [string, string]> = {
  20: ["A l'aide d'une form", "w-[357px]"],
  21: ["L'étudiant 1 a une", "w-[341px]"],
  22: ["L'étudiant 5 a une", "w-[341px]"],
};
const all24 = Array.from({ length: 24 }, (_, i) => i + 1);

function LightSheet() {
  return (
    <div className="w-[660px] font-['Liberation_Sans'] text-[43px] leading-[54px] text-black">
      <div className="flex h-[55px] border-b border-[#9f9f9f]">
        <div className="flex w-[85px] items-end justify-end border-r border-[#b5b5b5] pb-[4px] pr-[3px]">
          <svg viewBox="0 0 47 46" className="h-[46px] w-[47px] fill-[#b3b3b3]"><path d="M47 0V46H0Z" /></svg>
        </div>
        <div className="w-[48px] border-r border-[#b5b5b5] pt-px text-center">A</div>
        <div className="w-[262px] border-r border-[#b5b5b5] pt-px text-center">B</div>
      </div>
      {all24.map((n) => (
        <div key={n} className="flex h-[55px]">
          <div className="w-[85px] shrink-0 border-b border-r border-b-[#cfcfcf] border-r-[#9f9f9f] pt-px text-center">{n}</div>
          <div className="w-[48px] shrink-0 border-b border-r border-[#d4d4d4] bg-white" />
          {lightNotes[n] ? (
            <div className="w-[527px] border-b border-[#d4d4d4] bg-white pl-[5px] pt-px"><L c={lightNotes[n][1]}>{lightNotes[n][0]}</L></div>
          ) : (
            <>
              <div
                className={
                  n >= 7 && n <= 16
                    ? "w-[262px] shrink-0 border-b border-r border-b-[#d4d4d4] border-r-black bg-white pl-[5px] pt-px"
                    : "flex w-[262px] shrink-0 justify-end border-b border-r border-[#d4d4d4] bg-white pr-[5px] pt-px"
                }
              >
                {n >= 7 && n <= 16 && <L c={n === 16 ? "w-[220px]" : "w-[196px]"}>Étudiant {n - 6}</L>}
                {n === 3 && <L c="w-[140px]">Valeur:</L>}
                {n === 5 && <L c="w-[232px]">Corrigé sur:</L>}
              </div>
              <div className={`w-[265px] border-b bg-white pt-px text-center ${n === 6 || n === 16 ? "border-black" : "border-[#d4d4d4]"}`}>
                {n === 3 ? "15%" : n === 4 ? "note 1" : ""}
              </div>
            </>
          )}
        </div>
      ))}
    </div>
  );
}

function LightWindow() {
  return (
    <div className="flex h-[2100px] flex-col bg-[#e6e6e6]">
      <div className="relative flex h-[51px] shrink-0 items-center bg-[#217346] pb-[2px] text-[18px] text-[#a6cfb7]">
        <Circuit stroke="#20613f" />
        <L c="ml-[31px] w-[225px]">Enregistrement automatique</L>
        <Toggle c="ml-[9px] w-[57px] text-white" />
        <Save c="ml-[20px] mt-[3px]" /><Undo c="ml-[19px] mt-[3px]" /><Chev c="ml-[7px]" /><Redo c="ml-[15px] mt-[3px] opacity-40" /><Chev c="ml-[8px] opacity-40" /><Custom c="ml-[20px]" />
        <L c="ml-[510px] w-[116px]">Pour cours.xlsx</L><Tri c="ml-[9px]" />
        <div className="ml-[497px] mt-[2px] flex h-[33px] w-[550px] shrink-0 items-center bg-[#a0cdb3] text-[#217346]">
          <Mag c="ml-[28px] h-[22px] w-[22px]" /><L c="ml-[24px] w-[85px]">Rechercher</L>
        </div>
        <L c="relative ml-[1073px] w-[212px]">Dufour, Ludwig-Emmanuel</L>
        <span className="relative ml-[16px] mt-[2px] flex h-[36px] w-[36px] shrink-0 items-center justify-center rounded-full bg-[#e3008c] text-[15px] text-white">DL</span>
        <RibbonOpt c="relative ml-[42px]" /><Minus c="relative ml-[52px]" /><Restore c="relative ml-[54px]" /><Close c="relative ml-[51px]" />
      </div>
      <div className="bg-[#f3f2f1]">
        <div className="flex h-[50px] items-start pt-[11px] text-[19px] text-[#444]">
          <L c="ml-[20px] w-[57px]">Fichier</L>
          <L c="ml-[40px] h-[31px] w-[65px] border-b-[5px] border-[#217346] font-semibold">Accueil</L>
          <L c="ml-[41px] w-[76px]">Insertion</L>
          <L c="ml-[45px] w-[116px]">Mise en page</L>
          <L c="ml-[45px] w-[80px]">Formules</L>
          <L c="ml-[44px] w-[75px]">Données</L>
          <L c="ml-[44px] w-[71px]">Révision</L>
          <L c="ml-[43px] w-[82px]">Affichage</L>
          <L c="ml-[41px] w-[40px]">Aide</L>
          <L c="ml-[41px] w-[77px]">Antidote</L>
          <L c="ml-[40px] w-[70px]">Acrobat</L>
          <div className="-mt-[7px] ml-[2249px] flex h-[35px] w-[126px] shrink-0 items-center rounded-[3px] border border-[#e1dfdd] bg-white text-[18px] font-semibold text-[#217346]">
            <Share c="ml-[12px]" /><L c="ml-[5px] w-[76px]">Partager</L>
          </div>
          <div className="-mt-[7px] ml-[12px] flex h-[35px] w-[182px] shrink-0 items-center rounded-[3px] border border-[#e1dfdd] bg-white text-[18px] font-semibold text-[#217346]">
            <Comment c="ml-[11px]" /><L c="ml-[6px] w-[131px]">Commentaires</L>
          </div>
        </div>
        <LightRibbon />
      </div>
      <div className="flex h-[66px] shrink-0 items-start bg-linear-to-b from-[#d2d2d2] via-[#e6e6e6] via-20% to-[#e6e6e6] pt-[16px] text-[18px] text-[#444]">
        <div className="ml-[7px] flex h-[34px] w-[152px] items-center border border-[#c8c8c8] bg-white"><L c="ml-[7px] w-[22px]">B1</L><Tri c="ml-[102px] text-[#777]" /></div>
        <div className="ml-[20px] flex h-[34px] w-[4px] flex-col justify-center gap-[4px]">
          <span className="h-[3px] w-[3px] bg-[#aaa]" /><span className="h-[3px] w-[3px] bg-[#aaa]" /><span className="h-[3px] w-[3px] bg-[#aaa]" />
        </div>
        <div className="ml-[21px] flex h-[34px] w-[164px] items-center border border-[#c8c8c8] bg-white text-[#c0c0c0]">
          <svg viewBox="0 0 18 16" className="ml-[18px] h-[16px] w-[18px] fill-none stroke-current" strokeWidth="2.600"><path d="M1 1 17 15M17 1 1 15" /></svg>
          <svg viewBox="0 0 20 16" className="ml-[36px] h-[16px] w-[20px] fill-none stroke-current" strokeWidth="3.200"><path d="M1 9 7 14 19 1" /></svg>
          <span className="ml-[34px] font-['Liberation_Serif'] text-[24px] italic text-[#555]">fx</span>
        </div>
        <div className="ml-[4px] flex h-[34px] w-[3462px] items-center justify-end border border-[#c8c8c8] bg-white pr-[7px] text-[#666]"><Tri c="scale-y-125" /></div>
      </div>
      <div className="flex h-[1728px] shrink-0 justify-between border-b border-[#9a9a9a]">
        <LightSheet />
        <div className="mr-[3px] flex w-[28px] flex-col border-l border-[#b5b5b5] text-[#666]">
          <div className="flex h-[25px] items-center justify-center border border-[#b5b5b5] bg-white"><Tri c="rotate-180" /></div>
          <div className="mt-px h-[1609px] border border-[#b5b5b5] bg-white" />
          <div className="h-[69px] bg-[#d8d8d8]" />
          <div className="flex h-[24px] items-center justify-center border border-[#b5b5b5] bg-white"><Tri /></div>
        </div>
      </div>
      <div className="flex h-[34px] shrink-0 items-start border-b border-[#c6c6c6] text-[18px] leading-[30px] text-[#444]">
        <Tri c="ml-[26px] mt-[13px] rotate-90 text-[#b5b5b5]" /><Tri c="ml-[27px] mt-[13px] -rotate-90 text-[#b5b5b5]" />
        <div className="-mt-px ml-[45px] h-[31px] w-[81px] border-b-[3px] border-[#217346] bg-white pl-[12px] font-bold text-[#217346]"><L c="w-[56px]">Notes</L></div>
        <L c="ml-[16px] w-[110px]">F-Matricielle</L><Sep c="ml-[18px] mt-[3px] h-[26px] bg-[#a6a6a6]" />
        <L c="ml-[11px] w-[26px]">BD</L><Sep c="ml-[13px] mt-[3px] h-[26px] bg-[#a6a6a6]" />
        <L c="ml-[14px] w-[67px]">Finance</L><Sep c="ml-[14px] mt-[3px] h-[26px] bg-[#a6a6a6]" />
        <L c="ml-[13px] w-[33px]">Trie</L><Sep c="ml-[15px] mt-[3px] h-[26px] bg-[#a6a6a6]" />
        <L c="ml-[12px] w-[45px]">Filtre</L><Sep c="ml-[14px] mt-[3px] h-[26px] bg-[#a6a6a6]" />
        <L c="ml-[12px] w-[36px]">TCD</L><Sep c="ml-[13px] mt-[3px] h-[26px] bg-[#a6a6a6]" />
        <svg viewBox="0 0 24 24" className="ml-[38px] mt-[5px] h-[24px] w-[24px] fill-none stroke-[#777]" strokeWidth="1.600"><circle cx="12" cy="12" r="10.500" /><path d="M6 12H18M12 6V18" /></svg>
        <div className="ml-[1550px] mt-[9px] flex w-[3px] flex-col gap-[3px]"><span className="h-[3px] w-[2px] bg-[#aaa]" /><span className="h-[3px] w-[2px] bg-[#aaa]" /><span className="h-[3px] w-[2px] bg-[#aaa]" /></div>
        <div className="ml-[17px] mt-[4px] flex h-[25px] w-[1490px] items-center justify-between border border-[#b5b5b5] bg-white text-[#666]">
          <span className="flex h-full w-[24px] items-center justify-center border-r border-[#b5b5b5]"><Tri c="rotate-90" /></span>
          <span className="flex h-full w-[25px] items-center justify-center border-l-2 border-[#b5b5b5]"><Tri c="-rotate-90" /></span>
        </div>
      </div>
      <div className="flex h-[33px] items-center bg-[#f3f2f1] text-[16.5px] text-[#444]">
        <L c="ml-[10px] w-[28px]">Prêt</L>
        <span className="ml-[3353px] flex h-[33px] w-[59px] items-center justify-center bg-[#c8c6c4]">
          <svg viewBox="0 0 21 20" className="h-[20px] w-[21px] fill-none stroke-black" strokeWidth="1.600"><path d="M1 1H20V19H1ZM1 7H20M1 13H20M7 1V19M14 1V19" /></svg>
        </span>
        <svg viewBox="0 0 21 20" className="ml-[21px] h-[20px] w-[21px] fill-none stroke-[#444]" strokeWidth="1.500"><path d="M1 1H20V19H1ZM5 4H16V16H5ZM7 7H14M7 10H14M7 13H14" /></svg>
        <svg viewBox="0 0 21 20" className="ml-[39px] h-[20px] w-[21px] fill-none stroke-[#444]" strokeWidth="1.500"><path d="M1 1H20V19H1ZM1 12H8V1M8 12H14V1" /></svg>
        <span className="ml-[28px] h-[2px] w-[11px] bg-[#444]" />
        <div className="ml-[8px] flex h-[20px] w-[148px] items-center">
          <span className="h-[2px] w-[74px] bg-[#b0aeac]" /><span className="h-[8px] w-px bg-[#b0aeac]" /><span className="h-[2px] w-[24px] bg-[#b0aeac]" /><span className="h-[17px] w-[7px] bg-[#777]" /><span className="h-[2px] w-[42px] bg-[#b0aeac]" />
        </div>
        <svg viewBox="0 0 12 12" className="ml-[8px] h-[12px] w-[12px] stroke-[#444]" strokeWidth="1.600"><path d="M0 6H12M6 0V12" /></svg>
        <L c="ml-[17px] w-[45px]">220 %</L>
      </div>
    </div>
  );
}

function LightTaskbar() {
  return (
    <div className="relative flex h-[60px] items-center bg-linear-to-r from-[#21373f] from-20% via-[#1d2d40] via-75% to-[#1a2747] to-94% text-white">
      <div className="flex h-[60px] w-[73px] shrink-0 items-center bg-[#1b1b1b]"><WinLogo c="ml-[24px]" /></div>
      <div className="flex h-[60px] w-[514px] shrink-0 items-center border-b border-r border-t-2 border-[#bdbdbd] bg-[#f2f2f2] text-[23px] text-[#222]">
        <Mag c="ml-[17px] h-[25px] w-[25px]" /><L c="ml-[18px] mt-px w-[383px]">Taper ici pour effectuer une recherche</L>
      </div>
      <Ring c="ml-[24px]" /><TaskView c="ml-[46px]" />
      <div className="ml-[34px] flex h-[60px] w-[61px] items-center justify-center border-b-[3px] border-[#76b9ed] pt-[3px]"><Folder /></div>
      <Firefox c="ml-[26px]" /><Outlook c="ml-[39px]" />
      <div className="ml-[27px] flex h-[60px] w-[61px] items-center justify-center border-b-[3px] border-[#76b9ed] pt-[3px]"><Chrome /></div>
      <div className="ml-[14px] flex h-[60px] w-[61px] items-center justify-center border-b-[3px] border-[#76b9ed] pt-[3px]"><ExcelI /></div>
      <div className="ml-[7px] flex h-[60px] w-[74px] items-center justify-center border-b-[3px] border-[#76b9ed] bg-[#4d6068] pt-[1px]"><AppWin /></div>
      <svg viewBox="0 0 34 24" className="ml-[2126px] h-[24px] w-[34px] shrink-0"><path d="M16 1C24 -1 30 4 31 12L30 20H14Z" fill="#5fa8e8" /><path d="M8 23C-2 23-1 12 7 11C8 3 20 3 21 11C30 8 34 22 25 23Z" fill="#cfeafc" /></svg>
      <L c="ml-[11px] mt-[2px] w-[130px] text-[21px]">7°C&nbsp; Nuageux</L>
      <svg viewBox="0 0 18 11" className="ml-[27px] h-[11px] w-[18px] shrink-0 fill-none stroke-white" strokeWidth="1.600"><path d="M1 10 9 1.500 17 10" /></svg>
      <svg viewBox="0 0 26 18" className="ml-[14px] h-[18px] w-[26px] shrink-0"><path d="M6 17C-2 17-1 8 5 8C8-1 19 0 20 7C28 7 27 17 21 17Z" fill="#1490df" /></svg>
      <svg viewBox="0 0 24 20" className="ml-[10px] h-[20px] w-[24px] shrink-0 fill-none stroke-white" strokeWidth="1.500"><path d="M7 2H23V14H5M1 1H6V7H1ZM4 7V18H18M14 14V18" /></svg>
      <svg viewBox="0 0 24 20" className="ml-[11px] h-[20px] w-[24px] shrink-0 fill-none stroke-white" strokeWidth="1.500"><path d="M1 7H4L10 1V19L4 13H1ZM15 6 22 13M22 6 15 13" /></svg>
      <div className="ml-[15px] flex h-[60px] w-[190px] shrink-0 items-center bg-linear-to-r from-[#1a2444] to-[#1b1b1c] to-35% text-[18px] leading-[28px]">
        <div className="flex w-[96px] flex-col items-center pt-[1px]"><L c="w-[44px]">09:22</L><L c="w-[95px]">2021-10-26</L></div>
        <span className="relative ml-[29px] h-[30px] w-[40px]">
          <svg viewBox="0 0 24 26" className="absolute left-0 top-[-2px] h-[26px] w-[24px]"><path d="M0 0H23V21H15L10 26V21H0Z" fill="#fff" /><path d="M4 6H19M4 11H19M4 16H15" stroke="#222" strokeWidth="1.800" /></svg>
          <span className="absolute left-[12px] top-[13px] flex h-[24px] w-[24px] items-center justify-center rounded-full border border-[#999] bg-[#333] text-[16px]">1</span>
        </span>
        <span className="ml-[12px] h-[60px] w-px bg-[#555]" />
      </div>
    </div>
  );
}

/* ---------- dark window ---------- */
const DG = ({ c, label, children }: { c: string; label: React.ReactNode; children: React.ReactNode }) => (
  <div className={`h-[138px] shrink-0 border-r border-[#404040] ${c}`}>
    <div className="flex h-[114px]">{children}</div>
    <div className="flex h-[27px] items-center text-[16.5px] font-semibold text-[#d8d8d8]">{label}</div>
  </div>
);

function DarkRibbon() {
  return (
    <div className="flex h-[141px] shrink-0 bg-[#303030] text-[18px] text-[#a8a8a8]">
      <DG c="w-[350px]" label={<><L c="ml-[105px] w-[110px]">Presse-papiers</L><Launch c="ml-[117px]" /></>}>
        <div className="ml-[17px] flex w-[52px] shrink-0 flex-col items-center pt-[8px] text-[#5c5c5c]">
          <Paste d />
          <L c="mt-[4px] w-[45px]">Coller</L>
          <Chev c="mt-[6px]" />
        </div>
        <div className="pt-[2px] font-semibold">
          <div className="flex h-[36px] items-center pl-[9px] text-[#f0f0f0]"><Cut d /><L c="ml-[4px] w-[58px]">Couper</L></div>
          <div className="flex h-[36px] items-center pl-[9px] text-[#f0f0f0]"><CopyI d /><L c="ml-[4px] w-[52px]">Copier</L><Chev c="ml-[15px]" /></div>
          <div className="flex h-[36px] items-center pl-[9px] font-normal text-[#626262]"><Brush d /><L c="ml-[5px] w-[223px]">Reproduire la mise en forme</L></div>
        </div>
      </DG>
      <DG c="w-[334px]" label={<><L c="ml-[132px] w-[44px]">Police</L><Launch c="ml-[141px] text-[#666]" /></>}>
        <div className="pt-[14px]">
          <div className="flex h-[36px] items-center">
            <div className="ml-[15px] flex h-[36px] w-[180px] items-center border border-[#444] bg-[#252525] text-[#666]"><L c="ml-[3px] w-[35px]">Arial</L><Chev c="ml-[124px]" /></div>
            <div className="flex h-[36px] w-[62px] items-center border border-[#444] bg-[#252525] text-[#666]"><L c="ml-[3px] w-[20px]">10</L><Chev c="ml-[22px]" /></div>
            <div className="ml-[8px] w-[24px]"><AUp d /></div>
            <div className="ml-[9px] w-[21px]"><AUp d down /></div>
          </div>
          <div className="mt-[12px] flex h-[34px] items-center">
            <L c="ml-[20px] w-[15px] text-[20px] font-bold">G</L>
            <L c="ml-[19px] w-[10px] font-['Liberation_Serif'] text-[23px] italic">I</L>
            <L c="ml-[23px] w-[13px] text-[20px] underline">S</L>
            <Chev c="ml-[13px] text-[#666]" />
            <span className="ml-[24px] shrink-0"><Borders d /></span><Chev c="ml-[9px] text-[#666]" /><Sep c="ml-[13px] h-[32px] bg-[#404040]" />
            <span className="ml-[12px] shrink-0"><Bucket d /></span><Chev c="ml-[8px] text-[#666]" />
            <span className="ml-[12px] shrink-0"><FontColor d /></span><Chev c="ml-[9px] text-[#666]" />
          </div>
        </div>
      </DG>
      <DG c="w-[555px]" label={<><L c="ml-[220px] w-[88px]">Alignement</L><Launch c="ml-[228px] text-[#666]" /></>}>
        <div className="w-[199px] shrink-0 pt-[14px]">
          <div className="flex h-[36px] items-center">
            <Lines c="ml-[19px]" v="t" /><Lines c="ml-[11px]" v="m" /><Lines c="ml-[10px]" v="b" /><Orient d c="ml-[24px]" /><Chev c="ml-[7px] text-[#666]" />
          </div>
          <div className="mt-[12px] flex h-[34px] items-center">
            <Lines c="ml-[19px]" v="l" /><Lines c="ml-[11px]" v="c" /><Lines c="ml-[10px]" v="r" />
            <span className="ml-[25px] shrink-0"><Indent d out /></span><span className="ml-[10px] shrink-0"><Indent d /></span>
          </div>
        </div>
        <Sep c="mt-[5px] h-[94px] bg-[#404040]" />
        <div className="pt-[14px]">
          <div className="flex h-[36px] items-center"><Wrap d c="ml-[11px]" /><L c="ml-[6px] w-[297px] text-[#626262]">Renvoyer à la ligne automatiquement</L></div>
          <div className="mt-[12px] flex h-[34px] items-center"><Merge d c="ml-[9px]" /><L c="ml-[5px] w-[158px] text-[#626262]">Fusionner et centrer</L><Chev c="ml-[13px] text-[#666]" /></div>
        </div>
      </DG>
      <DG c="w-[219px]" label={<><L c="ml-[68px] w-[60px]">Nombre</L><Launch c="ml-[76px] text-[#666]" /></>}>
        <div className="pt-[14px]">
          <div className="ml-[10px] flex h-[36px] w-[202px] items-center border border-[#444] bg-[#252525] text-[#666]"><L c="ml-[4px] w-[102px]">Pourcentage</L><Chev c="ml-[78px]" /></div>
          <div className="mt-[12px] flex h-[34px] items-center">
            <L c="ml-[20px] w-[13px] text-[24px]">$</L><Chev c="ml-[16px] text-[#666]" /><L c="ml-[10px] w-[24px] text-[24px]">%</L><L c="ml-[8px] w-[24px]">000</L>
            <Dec d more c="ml-[24px]" /><Dec d c="ml-[8px]" />
          </div>
        </div>
      </DG>
      <DG c="w-[396px] text-[#626262]" label={<L c="ml-[178px] w-[42px]">Styles</L>}>
        <Big c="ml-[15px] w-[136px] pt-[6px]" icon={<CondFmt d />}>
          <Line><L c="w-[115px]">Mise en forme</L></Line><Line><L c="w-[114px]">conditionnelle</L><Chev /></Line>
        </Big>
        <Big c="ml-[4px] w-[146px] pt-[6px]" icon={<TableFmt d />}>
          <Line><L c="w-[144px]">Mettre sous forme</L></Line><Line><L c="w-[83px]">de tableau</L><Chev /></Line>
        </Big>
        <Big c="ml-[5px] w-[78px] pt-[6px]" icon={<TableFmt d plain />}>
          <Line><L c="w-[71px]">Styles de</L></Line><Line><L c="w-[59px]">cellules</L><Chev /></Line>
        </Big>
      </DG>
      <DG c="w-[242px] text-[#626262]" label={<L c="ml-[90px] w-[61px]">Cellules</L>}>
        <Big c="ml-[14px] w-[60px] pt-[6px]" icon={<InsertI d />}><Line><L c="w-[54px]">Insérer</L></Line><Line><Chev /></Line></Big>
        <Big c="ml-[3px] w-[88px] pt-[6px]" icon={<DeleteI d />}><Line><L c="w-[83px]">Supprimer</L></Line><Line><Chev /></Line></Big>
        <Big c="ml-[2px] w-[60px] pt-[6px]" icon={<FormatI d />}><Line><L c="w-[57px]">Format</L></Line><Line><Chev /></Line></Big>
      </DG>
      <DG c="w-[447px]" label={<L c="ml-[191px] w-[54px]">Édition</L>}>
        <div className="w-[246px] shrink-0 pt-[2px] font-semibold text-[#f0f0f0]">
          <div className="flex h-[34px] items-center"><Sigma c="ml-[16px] text-[#c8c8c8]" /><L c="ml-[6px] w-[167px]">Somme automatique</L><Chev c="ml-[14px]" /></div>
          <div className="flex h-[34px] items-center font-normal text-[#626262]"><FillDown d c="ml-[16px]" /><L c="ml-[6px] w-[67px]">Recopier</L><Chev c="ml-[6px]" /></div>
          <div className="flex h-[34px] items-center"><Eraser d c="ml-[16px]" /><L c="ml-[6px] w-[53px]">Effacer</L><Chev c="ml-[5px]" /></div>
        </div>
        <Big c="w-[64px] pt-[6px] text-[#626262]" icon={<SortFilter d />}><Line><L c="w-[51px]">Trier et</L></Line><Line><L c="w-[40px]">filtrer</L><Chev /></Line></Big>
        <Big c="w-[116px] pt-[7px] font-semibold text-[#f0f0f0]" icon={<BigMag d />}><Line><L c="w-[107px]">Rechercher et</L></Line><Line><L c="w-[95px]">sélectionner</L><Chev /></Line></Big>
      </DG>
      <DG c="w-[83px] text-[#626262]" label={<L c="ml-[16px] w-[40px]">Idées</L>}>
        <Big c="w-[76px] pt-[6px]" icon={<Bolt d />}><Line><L c="w-[40px]">Idées</L></Line></Big>
      </DG>
      <DG c="w-[156px] text-[#626262]" label={<L c="ml-[19px] w-[114px]">Confidentialité</L>}>
        <Big c="w-[155px] pt-[6px]" icon={<Sensitivity d />}>
          <Line><L c="w-[79px]">Niveau de</L></Line><Line><L c="w-[114px]">confidentialité</L><Chev /></Line>
        </Big>
      </DG>
      <Chev c="ml-[48px] mt-[126px] scale-125 rotate-180" />
    </div>
  );
}

const grades: string[][] = [
  ["8", "10", "", "", ""],
  ["7", "22", "", "", ""],
  ["8", "16", "4", "4", "43%"],
  ["9", "19", "13", "5", "62%"],
  ["10", "25", "15", "30", "100%"],
  ["9", "18", "4", "11", "56%"],
  ["1", "21", "1", "15", "49%"],
  ["10", "13", "10", "24", "70%"],
  ["4", "15", "6", "4", "40%"],
  ["3", "23", "2", "23", "62%"],
];
const heads: Record<number, string[]> = {
  3: ["15%", "35%", "20%", "30%", "100%"],
  4: ["note 1", "note 2", "note 3", "note 4", "Note finale"],
  5: ["10", "25", "15", "30", ""],
};
const colW = ["w-[182px]", "w-[181px]", "w-[182px]", "w-[181px]", "w-[182px]"];
const cellB = "shrink-0 border-b border-r border-[#d6d6d6] pt-[2px]";

function DarkRow({ n }: { n: number }) {
  const student = n >= 7 && n <= 16;
  const vals = student ? grades[n - 7] : heads[n] ?? ["", "", "", "", ""];
  return (
    <div className="flex h-[39.86px]">
      <div className={n === 7 ? "w-[62px] shrink-0 border-b border-[#888] bg-[#666] pt-[2px] text-center text-white" : "w-[62px] shrink-0 border-b border-[#3c3c3c] pt-[2px] text-center text-[#c8c8c8]"}>{n}</div>
      <div className={`w-[33px] ${cellB}`} />
      {n >= 20 && n <= 22 ? (
        <div className={`flex w-[1089px] pl-[5px] ${cellB}`}>
          {n === 20 && <L c="w-[1036px]">A l'aide d'une formule matricielle, calculez la note finale de chaque étudiant.</L>}
          {n === 21 && <><L c="w-[450px]">L'étudiant 1 a une note de : 62%</L><Sep c="ml-[89px] -mt-[2px] h-[40px] bg-[#d6d6d6]" /><Sep c="-mt-[2px] ml-[181px] h-[40px] bg-[#d6d6d6]" /><Sep c="-mt-[2px] ml-[180px] h-[40px] bg-[#d6d6d6]" /></>}
          {n === 22 && <><L c="w-[468px]">L'étudiant 5 a une note de : 100%</L><Sep c="ml-[71px] -mt-[2px] h-[40px] bg-[#d6d6d6]" /><Sep c="-mt-[2px] ml-[181px] h-[40px] bg-[#d6d6d6]" /><Sep c="-mt-[2px] ml-[180px] h-[40px] bg-[#d6d6d6]" /></>}
        </div>
      ) : (
        <>
          <div className={`flex w-[181px] ${student ? "pl-[5px]" : "justify-end pr-[4px]"} ${cellB}`}>
            {student && <L c={n === 16 ? "w-[158px]" : "w-[140px]"}>Étudiant {n - 6}</L>}
            {n === 3 && <L c="w-[97px]">Valeur:</L>}
            {n === 5 && <L c="w-[164px]">Corrigé sur:</L>}
          </div>
          {vals.map((v, i) => (
            <div
              key={i}
              className={`${colW[i]} ${i === 4 && n > 7 && n <= 16 ? "shrink-0 border-b-2 border-r-2 border-[#b04548] pt-[2px]" : cellB} ${n === 18 && i === 4 ? "flex justify-end pr-[5px] text-[#cf2030]" : "pl-[2px] text-center"}`}
            >
              {n === 18 && i === 4 ? <L c="w-[127px]">627,25%</L> : v}
            </div>
          ))}
        </>
      )}
      <div className={`w-[390px] pl-[29px] text-[#cf2030] ${cellB}`}>{n === 18 && <L c="w-[331px]">Essayer avec Somme()</L>}</div>
      <div className={`w-[55px] ${cellB}`} />
    </div>
  );
}

/** Coloured outline of a range referenced by the formula, with its corner handles. */
const Range = ({ c }: { c: string }) => (
  <div className={`absolute border-[2.5px] border-current ${c}`}>
    <span className="absolute -left-[5px] -top-[5px] h-[8px] w-[8px] bg-current" />
    <span className="absolute -right-[5px] -top-[5px] h-[8px] w-[8px] bg-current" />
    <span className="absolute -bottom-[5px] -left-[5px] h-[8px] w-[8px] bg-current" />
    <span className="absolute -bottom-[5px] -right-[5px] h-[8px] w-[8px] bg-current" />
  </div>
);

function DarkSheet() {
  return (
    <div className="relative w-[1629px] font-['Liberation_Sans'] text-[31px] leading-[38px] text-[#222]">
      <div className="flex h-[40px] bg-[#262626] text-center text-[30px] leading-[41px] text-[#cfcfcf]">
        <div className="flex w-[62px] shrink-0 items-center justify-end pr-[5px]"><svg viewBox="0 0 28 28" className="h-[28px] w-[28px] fill-[#666]"><path d="M28 0V28H0Z" /></svg></div>
        <div className="w-[33px] shrink-0">A</div>
        <div className="w-[181px] shrink-0 border-r border-[#444]">B</div>
        <div className="w-[182px] shrink-0 border-r border-[#444]">C</div>
        <div className="w-[181px] shrink-0 border-r border-[#444]">D</div>
        <div className="w-[182px] shrink-0 border-r border-[#444]">E</div>
        <div className="w-[181px] shrink-0 border-r border-[#444]">F</div>
        <div className="w-[182px] shrink-0 border-b-2 border-[#3f8a6a] bg-[#666]">G</div>
        <div className="w-[390px] shrink-0 border-r border-[#444]">H</div>
        <div className="w-[55px] shrink-0 border-r border-[#444]">I</div>
      </div>
      <div className="relative bg-linear-to-r from-[#262626] from-[62px] to-white to-[62px]">
        {all24.map((n) => (
          <DarkRow key={n} n={n} />
        ))}
        <Range c="left-[275px] top-[78px] h-[42px] w-[183px] bg-[#a57be0]/10 text-[#a57be0]" />
        <Range c="left-[457px] top-[78px] h-[42px] w-[183px] bg-[#e08a1e]/10 text-[#e08a1e]" />
        <Range c="left-[638px] top-[78px] h-[42px] w-[183px] bg-[#e4526a]/10 text-[#e4526a]" />
        <Range c="left-[820px] top-[78px] h-[42px] w-[183px] bg-[#e452a5]/10 text-[#e452a5]" />
        <Range c="left-[275px] top-[158px] h-[42px] w-[183px] bg-[#e4526a]/10 text-[#e4526a]" />
        <Range c="left-[457px] top-[158px] h-[42px] w-[183px] bg-[#e452a5]/10 text-[#e452a5]" />
        <Range c="left-[638px] top-[158px] h-[42px] w-[183px] bg-[#5b8be0]/10 text-[#5b8be0]" />
        <Range c="left-[820px] top-[158px] h-[42px] w-[183px] bg-[#189a40]/12 text-[#189a40]" />
        <Range c="left-[275px] top-[238px] h-[401px] w-[183px] bg-[#3c94f0]/10 text-[#6d88dd]" />
        <Range c="left-[457px] top-[238px] h-[401px] w-[183px] bg-[#40b020]/13 text-[#189a40]" />
        <Range c="left-[638px] top-[238px] h-[401px] w-[183px] bg-[#30a898]/10 text-[#2fa597]" />
        <Range c="left-[820px] top-[238px] h-[401px] w-[183px] bg-[#9060f0]/9 text-[#a57be0]" />
        <div className="absolute left-[1006px] top-[237px] h-[3px] w-[179px] bg-[#1e6b42]" />
        <div className="absolute left-[559px] top-[241px] h-[77px] w-[1070px] bg-white leading-[39px]">
          <L c="w-[1014px]">
            =<span className="text-[#7c8fe6]">C7:C16</span>/<span className="text-[#e8606f]">$C$5</span>*<span className="text-[#ab82e4]">$C$3</span>+<span className="text-[#189a40]">D7:D16</span>/<span className="text-[#e667b0]">$D$5</span>*<span className="text-[#e8951e]">$D$3</span>+<span className="text-[#2fa597]">E7:E16</span>/<span className="text-[#5b8be0]">$E$5</span>*<span className="text-[#e8606f]">$E$3</span>+<span className="text-[#ab82e4]">F7:F16</span>/
          </L>
          <L c="w-[157px]">
            <span className="text-[#189a40]">$F$5</span>*<span className="text-[#e667b0]">$F$3</span>
          </L>
          <span className="absolute left-[519px] top-[2px] h-[36px] w-[2px] bg-black" />
        </div>
      </div>
    </div>
  );
}

function DarkWindow() {
  return (
    <div className="absolute left-[492px] top-[270px] flex h-[1607px] w-[2856px] flex-col border-l border-t border-[#ababab] bg-[#262626] text-white shadow-[4px_6px_24px_rgba(0,0,0,0.45)]">
      <div className="h-[11px] shrink-0 bg-white" />
      <div className="relative flex h-[50px] shrink-0 items-center bg-[#0b0b0b] pb-[2px] text-[18px] font-semibold text-[#d8d8d8]">
        <Circuit stroke="#2a2a2a" />
        <L c="ml-[33px] w-[224px]">Enregistrement automatique</L>
        <Toggle c="ml-[11px] w-[56px]" />
        <Save c="ml-[22px] mt-[4px]" /><Undo c="ml-[20px] mt-[3px] text-[#444]" /><Tri c="ml-[6px] text-[#444]" /><Redo c="ml-[16px] mt-[3px] text-[#444]" /><Tri c="ml-[7px] text-[#444]" /><Custom c="ml-[23px]" />
        <L c="ml-[237px] w-[185px]">Pour cours.xlsx &nbsp;-&nbsp; Excel</L>
        <div className="ml-[226px] mt-[2px] flex h-[32px] w-[544px] shrink-0 items-center bg-[#3a3a3a] text-[#e8e8e8]">
          <Mag c="ml-[27px] h-[22px] w-[22px]" /><L c="ml-[24px] w-[88px]">Rechercher</L>
        </div>
        <L c="relative ml-[562px] mt-[2px] w-[235px]">Philippe Girard (Informatique)</L>
        <span className="relative ml-[16px] mt-[2px] flex h-[36px] w-[36px] shrink-0 items-center justify-center rounded-full bg-[#57917f] text-[15px] font-normal text-white">PG</span>
        <RibbonOpt c="relative ml-[42px]" /><Minus c="relative ml-[51px]" /><Restore c="relative ml-[53px]" /><Close c="relative ml-[53px]" />
      </div>
      <div className="flex h-[47px] shrink-0 items-start bg-[#303030] pt-[11px] text-[18.5px] font-semibold text-[#dcdcdc]">
        <L c="ml-[20px] w-[55px]">Fichier</L>
        <L c="ml-[40px] h-[31px] w-[64px] border-b-[5px] border-white text-white">Accueil</L>
        <L c="ml-[42px] w-[75px]">Insertion</L>
        <L c="ml-[43px] w-[119px]">Mise en page</L>
        <L c="ml-[43px] w-[79px]">Formules</L>
        <L c="ml-[45px] w-[76px]">Données</L>
        <L c="ml-[43px] w-[71px]">Révision</L>
        <L c="ml-[43px] w-[81px]">Affichage</L>
        <L c="ml-[41px] w-[38px]">Aide</L>
        <L c="ml-[46px] w-[73px]">Antidote</L>
        <L c="ml-[44px] w-[69px]">Acrobat</L>
        <div className="-mt-[7px] ml-[1267px] flex h-[36px] w-[128px] shrink-0 items-center rounded-[3px] bg-[#484848] text-[#f0f0f0]"><Share c="ml-[10px]" /><L c="ml-[7px] w-[77px]">Partager</L></div>
        <div className="-mt-[7px] ml-[11px] flex h-[36px] w-[181px] shrink-0 items-center rounded-[3px] bg-[#484848] text-[#f0f0f0]"><Comment c="ml-[12px]" /><L c="ml-[6px] w-[130px]">Commentaires</L></div>
      </div>
      <DarkRibbon />
      <div className="flex h-[67px] shrink-0 items-center border-t-[3px] border-[#1b1b1b] pb-[2px] text-[19px] text-[#e8e8e8]">
        <div className="ml-[7px] flex h-[37px] w-[150px] items-center bg-[#363636]"><L c="ml-[8px] w-[74px]">SOMME</L><Tri c="ml-[48px]" /></div>
        <div className="ml-[24px] flex w-[3px] flex-col gap-[4px]"><span className="h-[3px] w-[3px] bg-[#ddd]" /><span className="h-[3px] w-[3px] bg-[#ddd]" /><span className="h-[3px] w-[3px] bg-[#ddd]" /></div>
        <div className="ml-[17px] flex h-[37px] w-[167px] items-center bg-[#363636]">
          <svg viewBox="0 0 18 16" className="ml-[20px] h-[14px] w-[18px] fill-none stroke-current" strokeWidth="2.400"><path d="M1 1 17 15M17 1 1 15" /></svg>
          <svg viewBox="0 0 20 16" className="ml-[36px] h-[16px] w-[20px] fill-none stroke-current" strokeWidth="3"><path d="M1 9 7 14 19 1" /></svg>
          <span className="ml-[34px] font-['Liberation_Serif'] text-[22px] font-bold italic">fx</span>
        </div>
        <div className="ml-[3px] flex h-[37px] w-[2480px] items-center bg-[#363636]">
          <L c="ml-[18px] w-[704px]">=C7:C16/$C$5*$C$3+D7:D16/$D$5*$D$3+E7:E16/$E$5*$E$3+F7:F16/$F$5*$F$3</L><Chev c="ml-[1735px]" />
        </div>
      </div>
      <div className="flex h-[1158px] shrink-0 justify-between border-b-2 border-[#6a6a6a]">
        <DarkSheet />
        <div className="flex w-[27px] flex-col items-center border-l border-[#555] text-[#999]">
          <div className="flex h-[26px] w-[22px] items-center justify-center bg-[#3a3a3a]"><Tri c="rotate-180" /></div>
          <div className="mt-[3px] h-[1058px] w-[22px] bg-[#505050]" />
          <div className="mt-auto flex h-[24px] w-[22px] items-center justify-center bg-[#3a3a3a]"><Tri /></div>
        </div>
      </div>
      <div className="flex h-[40px] shrink-0 items-start border-b-2 border-[#1b1b1b] text-[18px] leading-[37px] text-[#e0e0e0]">
        <Tri c="ml-[39px] mt-[16px] rotate-90" /><Tri c="ml-[31px] mt-[16px] -rotate-90" />
        <div className="-mt-[2px] ml-[58px] h-[38px] w-[90px] border-b-[3px] border-[#1c6b4c] bg-white pl-[18px] font-bold text-[#217346]"><L c="w-[53px]">Notes</L></div>
        <L c="ml-[22px] w-[105px]">F-Matricielle</L><Sep c="ml-[23px] mt-[6px] h-[26px] bg-[#777]" />
        <L c="ml-[18px] w-[23px]">BD</L><Sep c="ml-[19px] mt-[6px] h-[26px] bg-[#777]" />
        <L c="ml-[21px] w-[63px]">Finance</L><Sep c="ml-[20px] mt-[6px] h-[26px] bg-[#777]" />
        <L c="ml-[20px] w-[32px]">Trie</L><Sep c="ml-[19px] mt-[6px] h-[26px] bg-[#777]" />
        <L c="ml-[20px] w-[42px]">Filtre</L><Sep c="ml-[20px] mt-[6px] h-[26px] bg-[#777]" />
        <L c="ml-[20px] w-[34px]">TCD</L><Sep c="ml-[18px] mt-[6px] h-[26px] bg-[#777]" />
        <svg viewBox="0 0 24 24" className="ml-[50px] mt-[7px] h-[24px] w-[24px] fill-none stroke-current" strokeWidth="2"><circle cx="12" cy="12" r="10.500" /><path d="M6 12H18M12 6V18" /></svg>
        <div className="ml-[856px] mt-[12px] flex w-[3px] flex-col gap-[3px]"><span className="h-[3px] w-[3px] bg-[#ddd]" /><span className="h-[3px] w-[3px] bg-[#ddd]" /><span className="h-[3px] w-[3px] bg-[#ddd]" /></div>
        <div className="ml-[22px] mt-[8px] flex h-[22px] w-[1084px] items-center justify-between bg-[#525252] text-[#bbb]">
          <span className="flex h-full w-[22px] items-center justify-center border-r-2 border-[#333]"><Tri c="rotate-90" /></span>
          <span className="flex h-full w-[22px] items-center justify-center border-l-2 border-[#333]"><Tri c="-rotate-90" /></span>
        </div>
      </div>
      <div className="flex h-[33px] shrink-0 items-center bg-[#313131] text-[16.5px] text-[#e0e0e0]">
        <L c="ml-[11px] w-[66px] font-semibold">Modifier</L>
        <svg viewBox="0 0 22 20" className="ml-[27px] h-[20px] w-[22px] fill-none stroke-current" strokeWidth="1.600"><path d="M1 1H21V8M1 1V19H9M1 6H21M4 10H9M4 14H8" /><circle cx="15" cy="14" r="5" /><circle cx="15" cy="14" r="1.500" /></svg>
        <svg viewBox="0 0 21 20" className="ml-[2296px] h-[18px] w-[21px] fill-none stroke-[#5a5a5a]" strokeWidth="1.600"><path d="M1 1H20V19H1ZM1 7H20M1 13H20M7 1V19M14 1V19" /></svg>
        <svg viewBox="0 0 21 20" className="ml-[38px] h-[18px] w-[21px] fill-none stroke-[#5a5a5a]" strokeWidth="1.500"><path d="M1 1H20V19H1ZM5 4H16V16H5ZM7 7H14M7 10H14M7 13H14" /></svg>
        <svg viewBox="0 0 21 20" className="ml-[39px] h-[18px] w-[21px] fill-none stroke-[#5a5a5a]" strokeWidth="1.500"><path d="M1 1H20V19H1ZM1 12H8V1M8 12H14V1" /></svg>
        <span className="ml-[29px] h-[2px] w-[13px] bg-[#888]" />
        <div className="ml-[6px] flex h-[20px] w-[150px] items-center justify-center bg-linear-to-b from-transparent from-45% via-[#ddd] via-50% to-transparent to-55%"><span className="h-[9px] w-[2px] bg-[#eee]" /></div>
        <svg viewBox="0 0 12 12" className="ml-[6px] h-[12px] w-[12px] stroke-[#888]" strokeWidth="1.600"><path d="M0 6H12M6 0V12" /></svg>
        <L c="ml-[22px] w-[41px] text-[#5a5a5a]">160 %</L>
      </div>
      <div className="flex h-[59px] shrink-0 items-center bg-linear-to-r from-[#272c44] from-3% via-[#23373c] via-5% to-[#1b2b3b] to-80%">
        <WinLogo c="ml-[22px]" /><Mag c="ml-[48px] h-[24px] w-[24px] text-white" /><Ring c="ml-[47px]" /><TaskView c="ml-[45px]" />
        <Folder c="ml-[46px]" /><Firefox c="ml-[38px]" /><Outlook c="ml-[37px]" />
        <div className="ml-[23px] flex h-[59px] w-[62px] shrink-0 items-center justify-center border-b-[3px] border-[#6ea8dc]"><Chrome /></div>
        <div className="ml-[7px] flex h-[59px] w-[71px] shrink-0 items-center justify-center border-b-[3px] border-[#6ea8dc] bg-[#4b5d61]"><ExcelI /></div>
        <div className="ml-[6px] flex h-[59px] w-[60px] shrink-0 items-center justify-center border-b-[3px] border-[#6ea8dc]"><Camtasia /></div>
        <div className="ml-[1827px] h-[59px] w-[152px] shrink-0 bg-[#182744]" />
        <div className="flex h-[59px] w-[159px] shrink-0 items-center bg-[#23293f] text-[17px] leading-[26px]">
          <svg viewBox="0 0 28 26" className="ml-[15px] h-[26px] w-[28px] shrink-0 fill-none stroke-white" strokeWidth="2"><path d="M20 2 24 5 12 20 8 21 9 17ZM9 14C3 14 1 18 4 22C8 26 14 20 20 24C24 25 26 20 22 18" /></svg>
          <div className="ml-[17px] flex w-[90px] flex-col items-center font-semibold text-[#e8e8e8]"><L c="w-[42px]">09:22</L><L c="w-[88px]">2021-10-26</L></div>
        </div>
      </div>
      <svg viewBox="0 0 28 46" className="absolute left-[1269px] top-[844px] h-[46px] w-[28px]"><path d="M1 1V36L9 28L17 45L23 42L15 26H27Z" fill="#ff0000" stroke="#222" strokeWidth="1.500" /></svg>
    </div>
  );
}

export default function App() {
  return (
    <div className="relative h-[2160px] w-[3840px] overflow-hidden font-['Open_Sans',sans-serif] text-[18px] leading-[24px]">
      <LightWindow />
      <LightTaskbar />
      <DarkWindow />
    </div>
  );
}
